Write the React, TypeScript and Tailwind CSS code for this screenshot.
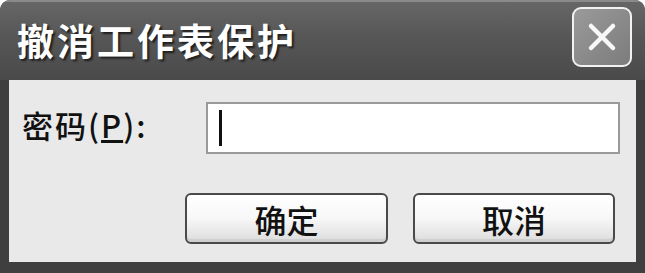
export default function App() {
    return (
        <div className="w-[645px] h-[273px] bg-white">
            <div className="w-full h-full flex flex-col rounded-t-[10px] overflow-hidden bg-[#3f3f3f] font-['Noto_Sans_CJK_SC',sans-serif]">
                {/* title bar */}
                <div className="h-[80px] shrink-0 flex items-center justify-between pl-[17px] pr-[13px] border-t-2 border-[#8a8a8a] bg-gradient-to-b from-[#666] via-[#555] to-[#4a4a4a]">
                    <h1 className="text-[37px] font-bold text-white tracking-[3px] leading-none [text-shadow:2px_2px_2px_#1e1e1e] mt-[-2px]">
                        撤消工作表保护
                    </h1>
                    <button className="w-[60px] h-[60px] mt-[-8px] rounded-[9px] border-2 border-[#f2f2f2] bg-gradient-to-br from-[#9a9a9a] to-[#7c7c7c] flex items-center justify-center">
                        <svg width="34" height="34" viewBox="0 0 34 34">
                            <path d="M6 6 L28 28 M28 6 L6 28" stroke="#f8f8f8" strokeWidth="4.5" strokeLinecap="round" />
                        </svg>
                    </button>
                </div>

                {/* client area */}
                <div className="flex-1 mx-[9px] mb-[11px] bg-[#e9e9e9] pt-[22px] pl-[13px] pr-[16px]">
                    <div className="flex items-center justify-between">
                        <label className="text-[31px] font-medium leading-none text-[#111] mt-[-8px] tracking-[2px]">
                            密码(<span className="underline underline-offset-2">P</span>):
                        </label>
                        <div className="w-[414px] h-[52px] bg-white border-2 border-[#9a9a9a] flex items-center pl-[11px]">
                            <div className="w-[3px] h-[36px] bg-[#111]" />
                        </div>
                    </div>

                    <div className="flex justify-end gap-[25px] mt-[39px] pr-[5px]">
                        <button className="w-[203px] h-[51px] rounded-[6px] border-2 border-[#4a4a4a] bg-gradient-to-b from-white via-[#f7f7f7] to-[#dcdcdc] shadow-[inset_0_-3px_0_#cfcfcf] text-[32px] font-medium leading-none text-[#111] flex items-center justify-center">
                            确定
                        </button>
                        <button className="w-[202px] h-[51px] rounded-[6px] border-2 border-[#4a4a4a] bg-gradient-to-b from-white via-[#f7f7f7] to-[#dcdcdc] shadow-[inset_0_-3px_0_#cfcfcf] text-[32px] font-medium leading-none text-[#111] flex items-center justify-center">
                            取消
                        </button>
                    </div>
                </div>
            </div>
        </div>
    );
}
